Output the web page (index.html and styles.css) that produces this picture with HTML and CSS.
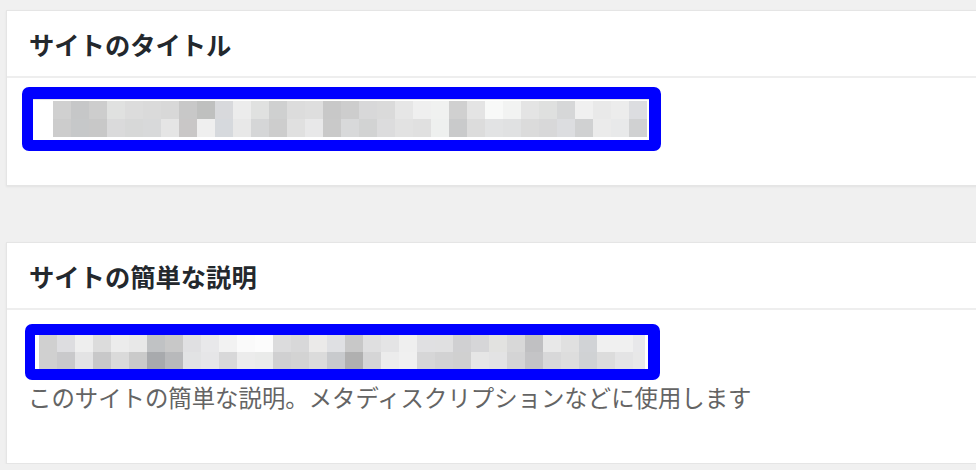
FILE: index.html
```html
<!DOCTYPE html>
<html lang="ja">
<head>
<meta charset="utf-8">
<title>サイト設定</title>
<link rel="stylesheet" href="styles.css">
</head>
<body>
<div class="wrap">
  <section class="panel">
    <h2 class="panel-title">サイトのタイトル</h2>
    <div class="panel-body body-title">
      <div class="hl hl-title">
        <div class="field field-title">
          <div class="mosaic m1"><div class="row r1"></div><div class="row r2"></div></div>
        </div>
      </div>
    </div>
  </section>
  <section class="panel">
    <h2 class="panel-title">サイトの簡単な説明</h2>
    <div class="panel-body body-desc">
      <div class="hl hl-desc">
        <div class="field field-desc">
          <div class="mosaic m2"><div class="row r1"></div><div class="row r2"></div></div>
        </div>
      </div>
      <p class="help">このサイトの簡単な説明。メタディスクリプションなどに使用します</p>
    </div>
  </section>
</div>
</body>
</html>
```
FILE: styles.css
```css
html, body {
  margin: 0;
  padding: 0;
}
body {
  background: #f0f0f0;
  overflow: hidden;
  font-family: "Noto Sans CJK JP", "Noto Sans", sans-serif;
}
.wrap {
  padding: 10px 0 0 6px;
}
.panel {
  background: #fff;
  border: 1px solid #e5e5e5;
  margin-right: -40px;
  box-shadow: 0 1px 2px rgba(0, 0, 0, 0.06);
}
.panel + .panel {
  margin-top: 56px;
}
.panel-title {
  margin: 0;
  height: 65px;
  display: flex;
  align-items: center;
  padding-left: 22px;
  font-size: 25.3px;
  font-weight: 700;
  color: #23282d;
  border-bottom: 2px solid #eeeeee;
}
.panel-body {
  padding-left: 15px;
}
.body-title {
  padding-top: 9px;
  padding-bottom: 34px;
}
.body-desc {
  padding-top: 14px;
  padding-bottom: 51px;
}
.hl {
  border-style: solid;
  border-color: #0000ff;
  border-radius: 7px;
  background: #fff;
  box-sizing: border-box;
}
.hl-title {
  width: 639px;
  border-width: 12px 12px 11px 11px;
}
.field-title {
  border-top: 1px solid #e2e2e2;
  padding: 1px 2px 3px 20px;
}
.hl-desc {
  width: 635px;
  margin-left: 3px;
  border-width: 11px 12px 11px 10px;
}
.field-desc {
  padding: 0 3px 0 4px;
}
.m1 .row {
  width: 594px;
  height: 18px;
}
.m2 .row {
  width: 606px;
  height: 17px;
}
.m1 .r1 {
  background: linear-gradient(90deg,
    #d0d0d0 0 18px, #c6c7c8 18px 36px, #cdcdcd 36px 54px, #e0e1e0 54px 72px,
    #dcdcdc 72px 90px, #dadada 90px 108px, #d8d8d8 108px 126px, #c8c8c8 126px 144px,
    #bfc0bf 144px 162px, #d8d9dc 162px 180px, #ececec 180px 198px, #e0e1e0 198px 216px,
    #cfd0d0 216px 234px, #dcdcdc 234px 252px, #dedede 252px 270px, #c8c8c8 270px 288px,
    #cdcdcd 288px 306px, #d8d8d9 306px 324px, #dadada 324px 342px, #e6e6e6 342px 360px,
    #efefef 360px 378px, #f0f1f0 378px 396px, #d0d0d0 396px 414px, #e4e4e4 414px 432px,
    #f8f9f8 432px 450px, #f2f3f2 450px 468px, #e4e4e4 468px 486px, #dfe0df 486px 504px,
    #d6d7d8 504px 522px, #f0f0f0 522px 540px, #e9e9e9 540px 558px, #ececec 558px 576px,
    #dcdde0 576px 594px);
}
.m1 .r2 {
  background: linear-gradient(90deg,
    #cccccc 0 18px, #c6c8c9 18px 36px, #c8c8c8 36px 54px, #dadadb 54px 72px,
    #d7d8d8 72px 90px, #d8d9da 90px 108px, #e5e5e5 108px 126px, #c9c7c7 126px 144px,
    #efefef 144px 162px, #d6d9dd 162px 180px, #e8e8e8 180px 198px, #d5d6d7 198px 216px,
    #cdcdcd 216px 234px, #e0e0e0 234px 252px, #e8e8e9 252px 270px, #c9c9c9 270px 288px,
    #d8d9da 288px 306px, #d2d3d3 306px 324px, #dcdcdd 324px 342px, #e2e2e2 342px 360px,
    #e0e0e0 360px 378px, #eef0ef 378px 396px, #c9cacb 396px 414px, #dcdcdc 414px 432px,
    #e2e3e4 432px 450px, #e0e1e2 450px 468px, #dbdbdb 468px 486px, #d8d8d9 486px 504px,
    #dcdde0 504px 522px, #d0d1d2 522px 540px, #ebebeb 540px 558px, #e8e9ea 558px 576px,
    #d0d1d2 576px 594px);
}
.m2 .r1 {
  background: linear-gradient(90deg,
    #d0d0d0 0 18px, #dddde0 18px 36px, #eeeeee 36px 54px, #dcdcdc 54px 72px,
    #ececec 72px 90px, #e8e8e8 90px 108px, #c0c2c4 108px 126px, #c8c8c8 126px 144px,
    #e0e0e2 144px 162px, #e8e8ea 162px 180px, #f2f2f2 180px 198px, #fafafa 198px 216px,
    #fcfcfc 216px 234px, #dcdcdd 234px 252px, #d8d8d9 252px 270px, #ebeae9 270px 288px,
    #dfe0e3 288px 306px, #c8c8c8 306px 324px, #dfdfe0 324px 342px, #e4e4e5 342px 360px,
    #efefef 360px 378px, #e0e0e2 378px 396px, #e0e0e1 396px 414px, #d0d0d2 414px 432px,
    #d6d6d8 432px 450px, #e2e2e0 450px 468px, #d8d8d8 468px 486px, #c0c0c2 486px 504px,
    #e8e8e8 504px 522px, #e0e0e0 522px 540px, #d1d3d6 540px 558px, #f0f0f0 558px 576px,
    #f0f0f0 576px 594px, #e8e8ea 594px 606px);
}
.m2 .r2 {
  background: linear-gradient(90deg,
    #d0d0d0 0 18px, #c9c9cb 18px 36px, #e3e3e4 36px 54px, #c8c8c9 54px 72px,
    #dadada 72px 90px, #cacaca 90px 108px, #a8aaad 108px 126px, #b8b9bb 126px 144px,
    #e2e3e4 144px 162px, #e6e6e8 162px 180px, #d8d8d9 180px 198px, #ececec 198px 216px,
    #eaebea 216px 234px, #d0d0d1 234px 252px, #d3d3d3 252px 270px, #dbdbdb 270px 288px,
    #c8cacd 288px 306px, #b0b0b0 306px 324px, #d5d5d6 324px 342px, #ececec 342px 360px,
    #f0f0f0 360px 378px, #d6d6d7 378px 396px, #d2d2d3 396px 414px, #d0d0d0 414px 432px,
    #e6e6e6 432px 450px, #e3e3e4 450px 468px, #d4d4d5 468px 486px, #c4c4c6 486px 504px,
    #d8d8d9 504px 522px, #dddddd 522px 540px, #d0d2d4 540px 558px, #dcdcdc 558px 576px,
    #e4e4e5 576px 594px, #e8e8e8 594px 606px);
}
.help {
  margin: 2px 0 0 6px;
  font-size: 23.4px;
  line-height: 30px;
  color: #646464;
}
```
